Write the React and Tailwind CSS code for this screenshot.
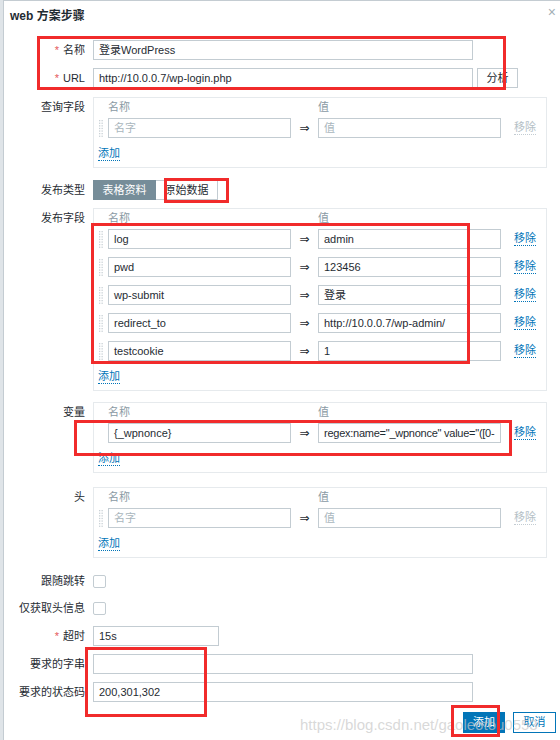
import React from "react";

function Handle() {
  const dots = [];
  for (let r = 0; r < 7; r++) {
    for (let c = 0; c < 2; c++) {
      dots.push(<rect key={r + "-" + c} x={c * 2.5} y={1 + r * 2.6} width="1.3" height="1.3" fill="#c9d1d6" />);
    }
  }
  return (
    <svg width="4" height="19" viewBox="0 0 4 19" className="shrink-0">
      {dots}
    </svg>
  );
}

function Input({ w, children, placeholder }) {
  return (
    <div className={`h-[20px] shrink-0 border border-[#c3ccd2] bg-white pl-[5px] leading-[18px] overflow-hidden whitespace-nowrap text-[#1f2c33] ${w}`}>
      {children ?? <span className="text-[#a9b6bd]">{placeholder}</span>}
    </div>
  );
}

function Link({ children, disabled }) {
  return (
    <span
      className={
        disabled
          ? "leading-none pb-[1px] border-b border-dotted border-[#c3ccd2] text-[#b4c0c6]"
          : "leading-none pb-[1px] border-b border-dotted border-[#0275b8] text-[#0275b8]"
      }
    >
      {children}
    </span>
  );
}

function PairRow({ name, value, handle = true, namePh = "名字", valuePh = "值", active = true }) {
  return (
    <div className="flex items-center h-[20px]">
      <div className="w-[14px] h-[20px] shrink-0 pl-[5px] flex items-center">{handle && <Handle />}</div>
      <Input w="w-[183px]" placeholder={namePh}>{name}</Input>
      <div className="w-[27px] shrink-0 text-center font-['DejaVu_Sans',sans-serif] text-[12px] leading-[20px] text-[#1f2c33]">⇒</div>
      <Input w="w-[183px]" placeholder={valuePh}>{value}</Input>
      <div className="ml-[13px] flex items-center">
        <Link disabled={!active}>移除</Link>
      </div>
    </div>
  );
}

function Box({ children }) {
  return (
    <div className="w-[454px] border border-[#e6eaed] pb-[4px]">
      <div className="h-[18px] flex items-center text-[#8a9aa4]">
        <span className="w-[224px] pl-[14px]">名称</span>
        <span>值</span>
      </div>
      <div className="mt-[2px] flex flex-col gap-[8px]">{children}</div>
      <div className="mt-[7px] h-[18px] flex items-center pl-[4px]">
        <Link>添加</Link>
      </div>
    </div>
  );
}

function Label({ children, req }) {
  return (
    <div className="w-[81px] shrink-0 text-right leading-[20px] text-[#1f2c33] whitespace-nowrap">
      {req && <span className="text-[#e45959] mr-[4px]">*</span>}
      {children}
    </div>
  );
}

function Row({ label, req, className = "", children }) {
  return (
    <div className={`flex ${className}`}>
      <Label req={req}>{label}</Label>
      <div className="ml-[8px] flex items-center">{children}</div>
    </div>
  );
}

function RowTop({ label, className = "", children }) {
  return (
    <div className={`flex items-start ${className}`}>
      <Label>{label}</Label>
      <div className="ml-[8px]">{children}</div>
    </div>
  );
}

function Checkbox() {
  return <div className="w-[13px] h-[13px] border border-[#c3ccd2] rounded-[2px] bg-white" />;
}

function Annot({ className }) {
  return <div className={`absolute border-[3px] border-[#f12b2b] pointer-events-none ${className}`} />;
}

export default function App() {
  return (
    <div className="relative w-[560px] h-[740px] overflow-hidden bg-[#dfe4e8] pl-[3px] font-['Liberation_Sans','Noto_Sans_CJK_SC',sans-serif] text-[11px]">
      <div className="h-full bg-white border-l border-t border-[#c4ccd2]">
        <div className="flex justify-between pl-[6px] pr-[4px] pt-[7px]">
          <div className="h-[16px] leading-[16px] font-bold text-[12px] text-[#1f2c33]">web 方案步骤</div>
          <div className="-mt-[3px] text-[14px] leading-none text-[#a3afb6]">×</div>
        </div>

        <Row label="名称" req className="mt-[16px]">
          <Input w="w-[380px]">登录WordPress</Input>
        </Row>
        <Row label="URL" req className="mt-[8px]">
          <Input w="w-[380px]">http://10.0.0.7/wp-login.php</Input>
          <div className="ml-[4px] w-[41px] h-[20px] border border-[#c3ccd2] bg-white text-center leading-[18px] text-[#1f2c33]">分析</div>
        </Row>

        <RowTop label="查询字段" className="mt-[9px]">
          <Box>
            <PairRow active={false} />
          </Box>
        </RowTop>

        <Row label="发布类型" className="mt-[12px]">
          <div className="flex h-[20px]">
            <div className="w-[63px] bg-[#768d99] border border-[#768d99] text-white text-center leading-[18px]">表格资料</div>
            <div className="w-[62px] bg-white border border-l-0 border-[#c3ccd2] text-[#1f2c33] text-center leading-[18px]">原始数据</div>
          </div>
        </Row>

        <RowTop label="发布字段" className="mt-[8px]">
          <Box>
            <PairRow name="log" value="admin" />
            <PairRow name="pwd" value="123456" />
            <PairRow name="wp-submit" value="登录" />
            <PairRow name="redirect_to" value="http://10.0.0.7/wp-admin/" />
            <PairRow name="testcookie" value="1" />
          </Box>
        </RowTop>

        <RowTop label="变量" className="mt-[11px]">
          <Box>
            <PairRow
              handle={false}
              name="{_wpnonce}"
              value={<span className="tracking-[-0.25px]">{'regex:name="_wpnonce" value="([0-'}</span>}
            />
          </Box>
        </RowTop>

        <RowTop label="头" className="mt-[14px]">
          <Box>
            <PairRow active={false} />
          </Box>
        </RowTop>

        <Row label="跟随跳转" className="mt-[13px]">
          <Checkbox />
        </Row>
        <Row label="仅获取头信息" className="mt-[7px]">
          <Checkbox />
        </Row>
        <Row label="超时" req className="mt-[8px]">
          <Input w="w-[126px]">15s</Input>
        </Row>
        <Row label="要求的字串" className="mt-[8px]">
          <Input w="w-[380px]" placeholder="" />
        </Row>
        <Row label="要求的状态码" className="mt-[8px]">
          <Input w="w-[380px]">200,301,302</Input>
        </Row>

        <div className="mt-[10px] flex justify-end gap-[8px] pr-[4px]">
          <div className="w-[42px] h-[21px] bg-[#0275b8] border border-[#0275b8] text-white text-center leading-[19px]">添加</div>
          <div className="w-[43px] h-[21px] bg-white border border-[#0275b8] text-[#0275b8] text-center leading-[19px]">取消</div>
        </div>
      </div>

      <div className="absolute left-[300px] top-[715px] text-[15px] leading-[20px] text-[#c8c8c8]/70 whitespace-nowrap pointer-events-none font-['Liberation_Sans',sans-serif]">
        https://blog.csdn.net/gaoleotou0553
      </div>

      <Annot className="left-[37px] top-[36px] w-[469px] h-[54px]" />
      <Annot className="left-[164px] top-[178px] w-[65px] h-[25px]" />
      <Annot className="left-[91px] top-[223px] w-[379px] h-[141px]" />
      <Annot className="left-[74px] top-[420px] w-[438px] h-[36px]" />
      <Annot className="left-[85px] top-[647px] w-[122px] h-[70px]" />
      <Annot className="left-[451px] top-[705px] w-[49px] h-[32px]" />
    </div>
  );
}
